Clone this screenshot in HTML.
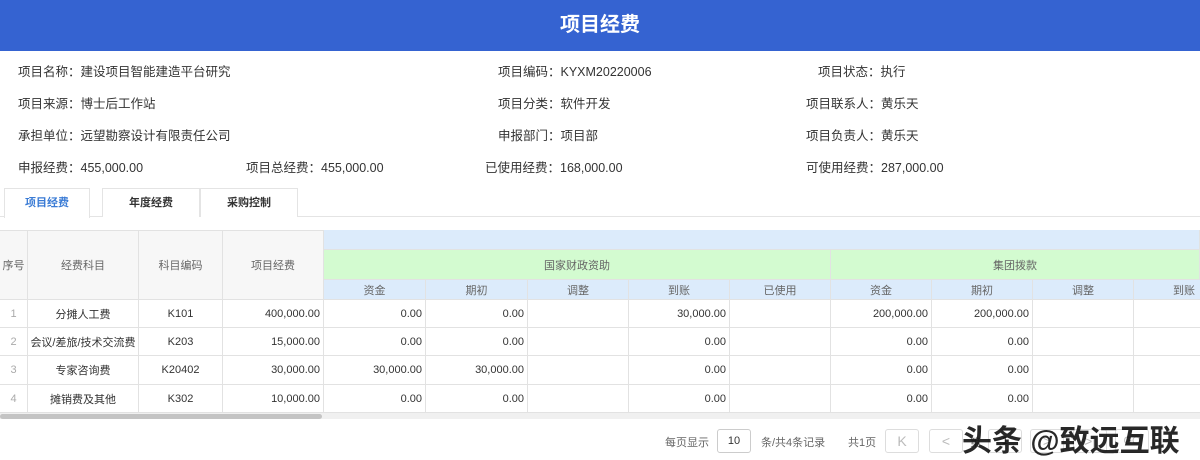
<!DOCTYPE html><html><head><meta charset="utf-8"><style>
*{box-sizing:border-box;margin:0;padding:0}
body{width:1200px;height:459px;overflow:hidden;background:#fff;font-family:"Liberation Sans","Noto Sans CJK SC",sans-serif;font-size:12px;color:#333;position:relative}
.hd{position:absolute;left:0;top:0;width:1200px;height:51px;background:#3563d1;color:#fff;font-size:20px;font-weight:bold;text-align:center;line-height:51px}
.i{position:absolute;font-size:12.5px;color:#333;white-space:nowrap}
.tab{position:absolute;top:188px;height:29px;border:1px solid #e4e4e4;border-bottom:none;text-align:center;line-height:28px;font-size:11px;font-weight:bold;color:#333;background:#fff}
.c{position:absolute;border-right:1px solid #e2e2e2;border-bottom:1px solid #e2e2e2;font-size:11px;display:flex;align-items:center;justify-content:center;white-space:nowrap;overflow:hidden}
.r{justify-content:flex-end;padding-right:3px}
.g{color:#666}
.btn{position:absolute;top:429px;height:24px;border:1px solid #ddd;border-radius:3px;color:#bbb;text-align:center;line-height:22px;font-size:14px;z-index:1;background:#fff}
.wm{position:absolute;left:962px;top:416px;font-size:30px;color:#111;font-weight:bold;white-space:nowrap;z-index:2;opacity:.9}
</style></head><body>
<div class="hd">项目经费</div>
<div class="i" style="left:18px;top:61px">项目名称：建设项目智能建造平台研究</div>
<div class="i" style="left:498px;top:61px">项目编码：KYXM20220006</div>
<div class="i" style="left:818px;top:61px">项目状态：执行</div>
<div class="i" style="left:18px;top:93px">项目来源：博士后工作站</div>
<div class="i" style="left:498px;top:93px">项目分类：软件开发</div>
<div class="i" style="left:806px;top:93px">项目联系人：黄乐天</div>
<div class="i" style="left:18px;top:125px">承担单位：远望勘察设计有限责任公司</div>
<div class="i" style="left:498px;top:125px">申报部门：项目部</div>
<div class="i" style="left:806px;top:125px">项目负责人：黄乐天</div>
<div class="i" style="left:18px;top:157px">申报经费：455,000.00</div>
<div class="i" style="left:246px;top:157px">项目总经费：455,000.00</div>
<div class="i" style="left:485px;top:157px">已使用经费：168,000.00</div>
<div class="i" style="left:806px;top:157px">可使用经费：287,000.00</div>
<div style="position:absolute;left:0;top:216px;width:1200px;border-top:1px solid #e4e4e4"></div>
<div class="tab" style="left:4px;width:86px;color:#3a7bd5;height:30px">项目经费</div>
<div class="tab" style="left:102px;width:98px">年度经费</div>
<div class="tab" style="left:200px;width:98px">采购控制</div>
<div style="position:absolute;left:0;top:230px;width:1200px;height:70px;background:#f7f7f7;border-top:1px solid #e2e2e2"></div>
<div class="c g" style="left:0;top:230px;width:28px;height:70px">序号</div>
<div class="c g" style="left:28px;top:230px;width:111px;height:70px">经费科目</div>
<div class="c g" style="left:139px;top:230px;width:84px;height:70px">科目编码</div>
<div class="c g" style="left:223px;top:230px;width:101px;height:70px">项目经费</div>
<div class="c" style="left:324px;top:230px;width:876px;height:20px;background:#dcebfb"></div>
<div class="c g" style="left:324px;top:250px;width:507px;height:30px;background:#d3fbd0">国家财政资助</div>
<div class="c g" style="left:831px;top:250px;width:369px;height:30px;background:#d3fbd0">集团拨款</div>
<div id="sub"></div>
<div id="rows"></div>
<div style="position:absolute;left:0;top:413px;width:1200px;height:6px;background:#f0f0f0"></div>
<div style="position:absolute;left:0;top:414px;width:322px;height:5px;background:#c4c4c4;border-radius:3px"></div>
<div class="i g" style="left:665px;top:434px;font-size:11px">每页显示</div>
<div style="position:absolute;left:717px;top:429px;width:34px;height:24px;border:1px solid #ccc;border-radius:3px;text-align:center;line-height:22px;font-size:11px">10</div>
<div class="i g" style="left:761px;top:434px;font-size:11px">条/共4条记录</div>
<div class="i g" style="left:848px;top:434px;font-size:11px">共1页</div>
<div class="btn" style="left:885px;width:34px">K</div>
<div class="btn" style="left:929px;width:34px">&lt;</div>
<div class="i g" style="left:970px;top:434px;font-size:11px;z-index:1">第</div>
<div class="btn" style="left:988px;width:34px;color:#333;font-size:11px">1</div>
<div class="btn" style="left:1030px;width:34px">&gt;</div>
<div class="btn" style="left:1073px;width:34px">&gt;|</div>
<div class="btn" style="left:1115px;width:34px;font-size:11px">GO</div>
<div class="wm">头条 @致远互联</div>
<script>
var X=[324,426,528,629,730,831,932,1033,1134,1235],S=["资金","期初","调整","到账","已使用","资金","期初","调整","到账"];
var h="";for(var k=0;k<9;k++)h+='<div class="c g" style="left:'+X[k]+'px;top:280px;width:'+(X[k+1]-X[k])+'px;height:20px;background:#dcebfb">'+S[k]+'</div>';
document.getElementById("sub").outerHTML=h;
var R=[["分摊人工费","K101","400,000.00","0.00","0.00","","30,000.00","","200,000.00","200,000.00","",""],
["会议/差旅/技术交流费","K203","15,000.00","0.00","0.00","","0.00","","0.00","0.00","",""],
["专家咨询费","K20402","30,000.00","30,000.00","30,000.00","","0.00","","0.00","0.00","",""],
["摊销费及其他","K302","10,000.00","0.00","0.00","","0.00","","0.00","0.00","",""]];
var Y=[300,328,356,385,413];h="";
for(var i=0;i<4;i++){var t=Y[i],hh=Y[i+1]-t,r=R[i];
h+='<div class="c" style="left:0;top:'+t+'px;width:28px;height:'+hh+'px;color:#aaa">'+(i+1)+'</div>';
h+='<div class="c" style="left:28px;top:'+t+'px;width:111px;height:'+hh+'px">'+r[0]+'</div>';
h+='<div class="c" style="left:139px;top:'+t+'px;width:84px;height:'+hh+'px">'+r[1]+'</div>';
h+='<div class="c r" style="left:223px;top:'+t+'px;width:101px;height:'+hh+'px">'+r[2]+'</div>';
for(var k=0;k<9;k++)h+='<div class="c r" style="left:'+X[k]+'px;top:'+t+'px;width:'+(X[k+1]-X[k])+'px;height:'+hh+'px">'+r[k+3]+'</div>';}
document.getElementById("rows").outerHTML=h;
</script>
</body></html>
